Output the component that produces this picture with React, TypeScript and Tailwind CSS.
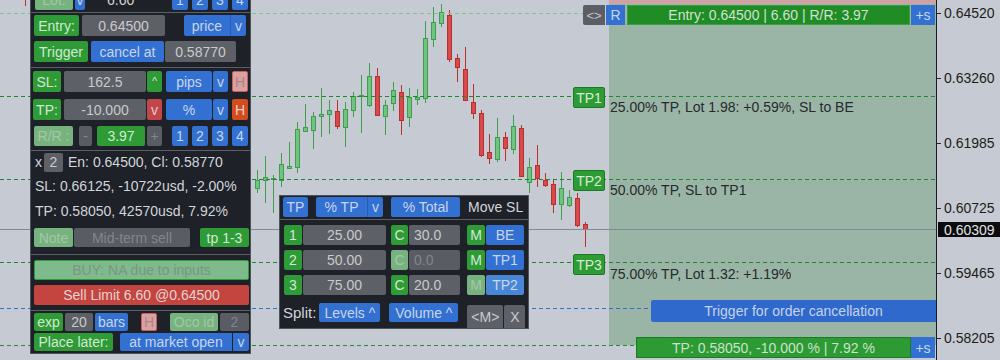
import React from 'react';

type Candle = [number, number, number, number, number, 0 | 1];

// x centre, wick top, wick bottom, body top, body bottom, up?
const candles: Candle[] = [
  [25, -5, 6, -10, -6, 0],
  [257, 170, 193, 180, 188, 1],
  [265, 156, 203, 177, 180, 1],
  [273, 175, 213, 178, 179, 1],
  [281, 153, 187, 164, 180, 1],
  [289, 142, 169, 166, 168, 1],
  [297, 122, 173, 129, 167, 1],
  [305, 104, 132, 127, 131, 1],
  [313, 112, 149, 116, 130, 1],
  [321, 88, 137, 114, 116, 1],
  [329, 100, 134, 110, 114, 1],
  [337, 100, 129, 111, 126, 0],
  [345, 102, 147, 109, 127, 1],
  [353, 92, 117, 96, 110, 1],
  [361, 75, 133, 95, 96, 1],
  [369, 63, 107, 76, 105, 1],
  [377, 68, 116, 76, 115, 0],
  [385, 100, 135, 105, 116, 1],
  [393, 82, 111, 90, 103, 1],
  [401, 85, 135, 92, 120, 0],
  [409, 88, 127, 97, 117, 1],
  [417, 89, 105, 97, 99, 1],
  [425, 21, 103, 38, 98, 1],
  [433, 7, 47, 22, 39, 1],
  [441, 4, 27, 12, 23, 1],
  [449, 10, 62, 15, 59, 0],
  [457, 54, 82, 58, 67, 0],
  [465, 47, 100, 69, 100, 0],
  [473, 84, 119, 102, 113, 0],
  [481, 110, 157, 113, 155, 0],
  [489, 134, 164, 152, 158, 0],
  [497, 118, 162, 137, 159, 1],
  [505, 132, 161, 137, 148, 0],
  [513, 115, 154, 126, 149, 1],
  [521, 125, 177, 128, 176, 0],
  [529, 158, 193, 167, 182, 1],
  [537, 145, 187, 165, 178, 0],
  [545, 173, 187, 180, 185, 0],
  [553, 180, 213, 184, 204, 0],
  [561, 172, 220, 188, 204, 1],
  [569, 190, 207, 197, 205, 1],
  [577, 193, 227, 198, 225, 0],
  [585, 222, 247, 224, 229, 0],
];

const axisPrices = [0.6452, 0.6326, 0.61985, 0.60725, 0.59465, 0.58205];
const priceToY = (p: number) => 13 + (0.6452 - p) * 5146.5;

const green = 'bg-[#2e9b36] text-[#d3e8d3]';
const greenDim = 'bg-[#77b37f] text-[#a4c7a8]';
const blue = 'bg-[#3270d1] text-[#c8d5ec]';
const gray = 'bg-[#5d6067] text-[#cacaca]';
const grayDim = 'bg-[#595c62] text-[#83868c]';
const red = 'bg-[#c3464a] text-[#e2caca]';
const pinkH = 'bg-[#d8a1a2] text-[#b08486] border border-[#d25a5a]';
const orangeH = 'bg-[#d34c1f] text-[#f2d2c4]';

function B({ className = '', children }: { className?: string; children?: React.ReactNode }) {
  return (
    <div className={`flex shrink-0 items-center justify-center rounded-[2px] ${className}`}>{children}</div>
  );
}

function Sep() {
  return <div className="h-px bg-[#5b5f67]" />;
}

function ChartCanvas() {
  return (
    <svg className="absolute left-0 top-0" width={936} height={360}>
      {/* position zone */}
      <rect x={609} y={4} width={327} height={341} fill="#9ab5a5" />
      <rect x={609} y={0} width={327} height={4} fill="#cfa2a5" />

      {candles.map(([x, wt, wb, bt, bb, up], i) => (
        <g key={i} stroke={up ? '#3f9d4e' : '#b9302f'}>
          <line x1={x + 0.5} x2={x + 0.5} y1={wt} y2={wb} />
          <rect
            x={x - 1.5}
            y={bt + 0.5}
            width={4}
            height={Math.max(bb - bt, 1)}
            fill={up ? '#70c47f' : '#d7494b'}
          />
        </g>
      ))}

      <line x1={0} x2={583} y1={13.5} y2={13.5} stroke="#79c988" strokeDasharray="4 3" />
      <line x1={0} x2={936} y1={96.5} y2={96.5} stroke="#1f872c" strokeDasharray="4 3" />
      <line x1={0} x2={936} y1={179.5} y2={179.5} stroke="#1f872c" strokeDasharray="4 3" />
      <line x1={0} x2={936} y1={262.5} y2={262.5} stroke="#1f872c" strokeDasharray="4 3" />
      <line x1={0} x2={936} y1={229.5} y2={229.5} stroke="#7f8a9c" />
      <line x1={0} x2={651} y1={308.5} y2={308.5} stroke="#2f6fd6" strokeDasharray="4 3" />
      <line x1={0} x2={636} y1={345.5} y2={345.5} stroke="#2a8a35" strokeDasharray="4 3" />
    </svg>
  );
}

function NumBoxes() {
  return (
    <div className="flex gap-[4px]">
      {['1', '2', '3', '4'].map((n) => (
        <B key={n} className={`w-[16px] ${blue}`}>
          {n}
        </B>
      ))}
    </div>
  );
}

function OrderPanel() {
  return (
    <div className="absolute left-[30px] top-[-14px] w-[221px] border border-[#4e525a] bg-[#1e2128] text-[#d2d5da]">
      {/* lot row, cut off by the window */}
      <div className="flex h-[21px] mt-[2px] mb-[2px] pl-[4px]">
        <B className={`w-[38px] ${greenDim}`}>Lot:</B>
        <B className={`ml-[2px] w-[10px] ${blue}`}>v</B>
        <div className="ml-[22px] w-[40px] flex items-center">6.60</div>
        <div className="ml-[25px] flex">
          <NumBoxes />
        </div>
      </div>
      <Sep />

      <div className="flex flex-col gap-[5px] pt-[2px] pb-[5px]">
        <div className="flex h-[21px] pl-[3px]">
          <B className={`w-[45px] ${green}`}>Entry:</B>
          <B className={`ml-[3px] w-[83px] ${gray}`}>0.64500</B>
          <B className={`ml-[19px] w-[46px] rounded-r-none ${blue}`}>price</B>
          <B className={`w-[16px] rounded-l-none border-l border-[#2a5cb0] ${blue}`}>v</B>
        </div>
        <div className="flex h-[21px] pl-[3px]">
          <B className={`w-[54px] ${green}`}>Trigger</B>
          <B className={`ml-[3px] w-[73px] ${blue}`}>cancel at</B>
          <B className={`ml-[1px] w-[71px] ${gray}`}>0.58770</B>
        </div>
      </div>
      <Sep />

      <div className="flex flex-col pt-[3px] pb-[4px]">
        <div className="flex h-[21px] pl-[2px]">
          <B className={`w-[28px] ${green}`}>SL:</B>
          <B className={`ml-[3px] w-[82px] ${gray}`}>162.5</B>
          <B className={`ml-[1px] w-[15px] text-[11px] ${green}`}>^</B>
          <B className={`ml-[4px] w-[46px] ${blue}`}>pips</B>
          <B className={`ml-[1px] w-[15px] ${blue}`}>v</B>
          <B className={`ml-[4px] w-[16px] ${pinkH}`}>H</B>
        </div>
        <div className="flex h-[21px] mt-[7px] pl-[2px]">
          <B className={`w-[28px] ${green}`}>TP:</B>
          <B className={`ml-[3px] w-[82px] ${gray}`}>-10.000</B>
          <B className={`ml-[1px] w-[15px] ${red}`}>v</B>
          <B className={`ml-[4px] w-[46px] ${blue}`}>%</B>
          <B className={`ml-[1px] w-[15px] ${blue}`}>v</B>
          <B className={`ml-[4px] w-[16px] ${orangeH}`}>H</B>
        </div>
        <div className="flex h-[20px] mt-[6px] pl-[3px]">
          <B className={`w-[39px] ${greenDim}`}>R/R :</B>
          <B className={`ml-[6px] w-[13px] ${grayDim}`}>-</B>
          <B className={`ml-[5px] w-[48px] ${green}`}>3.97</B>
          <B className={`ml-[2px] w-[15px] ${grayDim}`}>+</B>
          <div className="ml-[10px] flex">
            <NumBoxes />
          </div>
        </div>
      </div>
      <Sep />

      <div className="flex flex-col pt-[1px] pb-[7px] pl-[4px]">
        <div className="flex h-[20px] items-center">
          <span>x</span>
          <B className={`ml-[2px] h-[19px] w-[19px] ${gray}`}>2</B>
          <span className="ml-[5px]">En: 0.64500, Cl: 0.58770</span>
        </div>
        <div className="flex h-[20px] mt-[4px] items-center">SL: 0.66125, -10722usd, -2.00%</div>
        <div className="flex h-[20px] mt-[5px] items-center">TP: 0.58050, 42570usd, 7.92%</div>
        <div className="flex h-[19px] mt-[7px] -ml-[1px]">
          <B className={`w-[39px] ${greenDim}`}>Note</B>
          <B className={`ml-[1px] w-[116px] ${grayDim}`}>Mid-term sell</B>
          <B className={`ml-[10px] w-[49px] ${green}`}>tp 1-3</B>
        </div>
      </div>
      <Sep />

      <div className="flex flex-col gap-[5px] pt-[5px] pb-[5px] pl-[3px]">
        <B className="h-[20px] w-[215px] border border-[#2aa035] bg-[#7fba8c] text-[#7b9484]">
          BUY: NA due to inputs
        </B>
        <B className="h-[20px] w-[215px] bg-[#c4453f] text-[#e6d2d2]">Sell Limit 6.60 @0.64500</B>
      </div>
      <Sep />

      <div className="flex flex-col gap-[2px] pt-[2px] pb-[2px] pl-[3px]">
        <div className="flex h-[18px]">
          <B className={`w-[29px] ${green}`}>exp</B>
          <B className={`ml-[2px] w-[28px] ${gray}`}>20</B>
          <B className={`ml-[2px] w-[33px] ${blue}`}>bars</B>
          <B className={`ml-[13px] w-[16px] ${pinkH}`}>H</B>
          <B className={`ml-[13px] w-[48px] ${greenDim}`}>Oco id</B>
          <B className={`ml-[2px] w-[29px] ${grayDim}`}>2</B>
        </div>
        <div className="flex h-[18px]">
          <B className={`w-[79px] ${green}`}>Place later:</B>
          <B className={`ml-[7px] w-[112px] rounded-r-none ${blue}`}>at market open</B>
          <B className={`ml-[1px] w-[16px] rounded-l-none ${blue}`}>v</B>
        </div>
      </div>
    </div>
  );
}

const tpRows = [
  { n: '1', pct: '25.00', cDim: false, close: '30.0', mDim: false, move: 'BE', moveCls: blue },
  { n: '2', pct: '50.00', cDim: true, close: '0.0', mDim: false, move: 'TP1', moveCls: blue },
  { n: '3', pct: '75.00', cDim: false, close: '20.0', mDim: true, move: 'TP2', moveCls: 'bg-[#4787d6] text-[#cad9ee]' },
];

function TpTable() {
  return (
    <div className="absolute left-[279px] top-[195px] w-[250px] border border-[#4e525a] bg-[#1e2128] text-[#d2d5da]">
      <div className="flex h-[20px] mt-[1px] mb-[2px] pl-[3px]">
        <B className={`w-[25px] ${blue}`}>TP</B>
        <B className={`ml-[8px] w-[51px] rounded-r-none ${blue}`}>% TP</B>
        <B className={`w-[16px] rounded-l-none border-l border-[#2a5cb0] ${blue}`}>v</B>
        <B className={`ml-[8px] w-[69px] ${blue}`}>% Total</B>
        <div className="ml-[8px] flex items-center">Move SL</div>
      </div>
      <Sep />
      <div className="flex flex-col gap-[5px] pt-[5px]">
        {tpRows.map((r) => (
          <div key={r.n} className="flex h-[20px] pl-[4px]">
            <B className={`w-[18px] ${green}`}>{r.n}</B>
            <B className={`ml-[1px] w-[83px] ${gray}`}>{r.pct}</B>
            <B className={`ml-[5px] w-[17px] ${r.cDim ? greenDim : green}`}>C</B>
            <B className={`ml-[1px] w-[51px] justify-start pl-[5px] ${r.cDim ? grayDim : gray}`}>{r.close}</B>
            <B className={`ml-[7px] w-[18px] ${r.mDim ? greenDim : green}`}>M</B>
            <B className={`ml-[1px] w-[38px] ${r.moveCls}`}>{r.move}</B>
          </div>
        ))}
      </div>
      <div className="flex h-[25px] mt-[8px] pl-[3px]">
        <div className="flex h-[19px] items-center text-[15px]">Split:</div>
        <B className={`ml-[3px] h-[19px] w-[61px] ${blue}`}>Levels ^</B>
        <B className={`ml-[9px] h-[19px] w-[69px] ${blue}`}>Volume ^</B>
        <B className={`ml-[9px] mt-[2px] h-[23px] w-[36px] rounded-b-none ${gray}`}>&lt;M&gt;</B>
        <B className={`ml-[1px] mt-[2px] h-[23px] w-[21px] rounded-b-none ${gray}`}>X</B>
      </div>
    </div>
  );
}

function EntryBar() {
  return (
    <div className="absolute left-[583px] top-[5px] flex h-[20px]">
      <B className="w-[22px] rounded-r-none bg-[#5b5e64] text-[13px] text-[#c2c5c9]">&lt;&gt;</B>
      <B className={`ml-[1px] w-[19px] rounded-none ${blue}`}>R</B>
      <B className="ml-[2px] w-[283px] rounded-none border border-[#3aa13f] bg-[#1f8c26] text-[#cfe2cf]">
        Entry: 0.64500 | 6.60 | R/R: 3.97
      </B>
      <B className={`ml-[1px] w-[24px] rounded-none ${blue}`}>+s</B>
    </div>
  );
}

function TpLevel({ top, name, text }: { top: number; name: string; text: string }) {
  return (
    <>
      <div
        className="absolute left-[573px] flex h-[21px] w-[32px] items-center justify-center rounded-[2px] border border-[#1d7a24] bg-[#2e9c35] text-[#d6ecd6]"
        style={{ top }}
      >
        {name}
      </div>
      <div className="absolute left-[610px] whitespace-nowrap text-[#262a2c]" style={{ top: top + 13 }}>
        {text}
      </div>
    </>
  );
}

function PriceAxis() {
  return (
    <div className="relative h-full w-[64px] border-l border-[#1c1c1c] text-[#1c1d20]">
      {axisPrices.map((p) => {
        const y = Math.round(priceToY(p));
        return (
          <React.Fragment key={p}>
            <div className="absolute left-0 h-px w-[4px] bg-[#2a2a2a]" style={{ top: y }} />
            <div className="absolute left-[7px]" style={{ top: y - 7 }}>
              {p.toFixed(5)}
            </div>
          </React.Fragment>
        );
      })}
      <div className="absolute left-[1px] top-[222px] flex h-[15px] w-[63px] items-center bg-[#0c0c0e] pl-[6px] text-[#e2e2e2]">
        0.60309
      </div>
    </div>
  );
}

export default function App() {
  return (
    <div className="flex h-[360px] w-[1000px] overflow-hidden bg-[#c6cad2] font-[family-name:Liberation_Sans,Arial,sans-serif] text-[14px] leading-none">
      <div className="relative h-full w-[936px] shrink-0">
        <ChartCanvas />
        <EntryBar />
        <TpLevel top={87} name="TP1" text="25.00% TP, Lot 1.98: +0.59%, SL to BE" />
        <TpLevel top={170} name="TP2" text="50.00% TP, SL to TP1" />
        <TpLevel top={254} name="TP3" text="75.00% TP, Lot 1.32: +1.19%" />

        {/* trigger for cancellation */}
        <div className="absolute left-[651px] top-[300px] flex h-[22px] w-[285px] items-center justify-center rounded-l-[2px] bg-[#3069cc] text-[#c4d2ea]">
          Trigger for order cancellation
        </div>

        {/* final TP bar */}
        <div className="absolute left-[636px] top-[337px] flex h-[21px]">
          <B className="w-[275px] rounded-none border border-[#1f7a22] bg-[#2c9b34] text-[#cbe2cb]">
            TP: 0.58050, -10.000 % | 7.92 %
          </B>
          <B className={`w-[24px] rounded-none ${blue}`}>+s</B>
        </div>

        <OrderPanel />
        <TpTable />
      </div>
      <PriceAxis />
    </div>
  );
}
